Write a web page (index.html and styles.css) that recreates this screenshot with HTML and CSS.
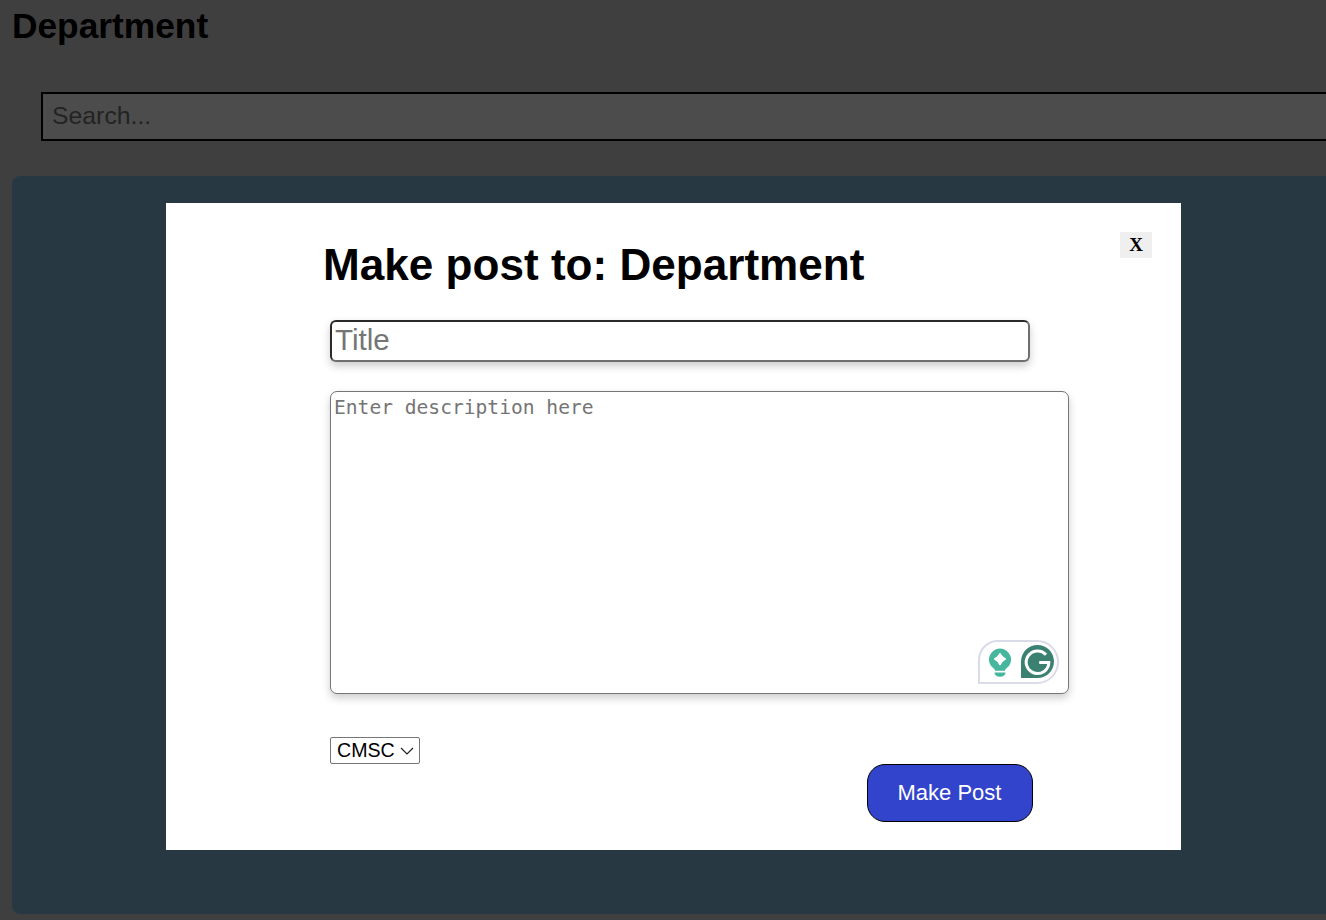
FILE: index.html
```html
<!DOCTYPE html>
<html lang="en">
<head>
<meta charset="utf-8">
<title>Department</title>
<link rel="stylesheet" href="styles.css">
</head>
<body>
<main class="page">
  <h1 class="page-title">Department</h1>
  <input class="search" type="text" placeholder="Search...">
  <section class="panel"></section>
</main>
<div class="overlay">
  <div class="modal">
    <button class="close" type="button">X</button>
    <h2 class="modal-title">Make post to: Department</h2>
    <form class="form">
      <input class="title-input" type="text" placeholder="Title">
      <div class="desc-wrap">
        <textarea class="desc" placeholder="Enter description here"></textarea>
        <div class="grammarly">
          <svg class="g-bulb" width="24" height="30" viewBox="0 0 24 30">
            <path d="M12 0.5a11 11 0 0 1 6.2 20.1c-.8.6-1 1.1-1.2 2.2H7c-.2-1.1-.4-1.6-1.2-2.2A11 11 0 0 1 12 .5z" fill="#46b79d"/>
            <path d="M12 4.800c1 .2 1.200 1.800 2.600 3.300 1.400 1.500 3.400 1.900 3.400 3 0 1.100-2 1.500-3.400 3-1.400 1.500-1.600 3.100-2.600 3.300-1-.2-1.200-1.800-2.600-3.300-1.400-1.500-3.400-1.900-3.400-3 0-1.100 2-1.500 3.400-3 1.400-1.500 1.600-3.100 2.600-3.300z" fill="#fff"/>
            <path d="M6.500 24.500h11c0 2.600-2 4.300-5.500 4.300s-5.500-1.700-5.500-4.300z" fill="#46b79d"/>
          </svg>
          <svg class="g-logo" width="33" height="33" viewBox="0 0 33 33">
            <path d="M16.500 0a16.500 16.500 0 0 1 0 33H0V16.500A16.500 16.500 0 0 1 16.500 0z" fill="#3a8171"/>
            <path d="M25 9.800A11.300 11.300 0 1 0 27.800 17.500H18.200" fill="none" stroke="#fff" stroke-width="3"/>
          </svg>
        </div>
      </div>
      <div class="actions">
        <select class="dept"><option>CMSC</option></select>
        <button class="submit" type="button">Make Post</button>
      </div>
    </form>
  </div>
</div>
</body>
</html>
```
FILE: styles.css
```css
* { box-sizing: border-box; }
html, body {
  margin: 0;
  height: 100%;
  overflow: hidden;
}
body {
  background: #d4d4d4;
  font-family: "Liberation Sans", Arial, sans-serif;
}
.page {
  width: 1440px;
  padding: 0 0 0 12px;
}
.page-title {
  margin: 0;
  padding-top: 6px;
  font-size: 35.3px;
  line-height: 40px;
  font-weight: 700;
  color: #000;
}
.search {
  display: block;
  width: 1400px;
  height: 49px;
  margin: 46px 0 0 29px;
  padding: 0 9px 1px;
  border: 2px solid #000;
  background: #fff;
  font: 24.8px "Liberation Sans", Arial, sans-serif;
  border-radius: 0;
  outline: none;
}
.search::placeholder { color: #757575; }
.panel {
  height: 738px;
  margin-top: 35px;
  background: #82bbdc;
  border-radius: 8px;
}
.overlay {
  position: fixed;
  inset: 0;
  background: rgba(0, 0, 0, 0.7);
}
.modal {
  position: relative;
  width: 1015px;
  height: 647px;
  margin: 203px 0 0 166px;
  padding: 34px 0 0 157px;
  background: #fff;
}
.close {
  position: absolute;
  top: 29px;
  right: 29px;
  width: 32px;
  height: 26px;
  padding: 0;
  border: 0;
  background: #efefef;
  font: 700 19px "Liberation Serif", "Times New Roman", serif;
  color: #000;
}
.modal-title {
  margin: 0;
  font-size: 44.1px;
  line-height: 56px;
  font-weight: 700;
  color: #000;
}
.form {
  display: flex;
  flex-direction: column;
  align-items: flex-start;
  margin: 27px 0 0 7px;
}
.title-input {
  width: 700px;
  height: 42px;
  padding: 0 3px 2px;
  border: 2px solid #6f6f6f;
  border-color: #2a2a2a #6f6f6f #6f6f6f #2a2a2a;
  border-radius: 6px;
  background: #fff;
  font: 29.6px "Liberation Sans", Arial, sans-serif;
  box-shadow: 0 4px 8px rgba(0, 0, 0, 0.2);
  outline: none;
}
.title-input::placeholder { color: #757575; }
.desc-wrap {
  position: relative;
  width: 739px;
  height: 303px;
  margin-top: 29px;
}
.desc {
  display: block;
  width: 100%;
  height: 100%;
  padding: 4px 3px 3px;
  border: 1px solid #767676;
  border-radius: 7px;
  background: #fff;
  font: 19.6px "DejaVu Sans Mono", monospace;
  line-height: 24px;
  resize: none;
  box-shadow: 0 4px 8px rgba(0, 0, 0, 0.2);
  outline: none;
}
.desc::placeholder { color: #757575; }
.grammarly {
  position: absolute;
  top: 249px;
  left: 648px;
  width: 81px;
  height: 44px;
  border: 2px solid #d9dce8;
  border-radius: 20px 22px 22px 0;
  background: #fff;
}
.g-bulb {
  position: absolute;
  top: 6px;
  left: 8px;
}
.g-logo {
  position: absolute;
  top: 3px;
  left: 41px;
}
.actions {
  display: flex;
  align-items: flex-start;
  justify-content: space-between;
  width: 703px;
  margin-top: 43px;
}
.dept {
  width: 90px;
  height: 27px;
  padding: 0 0 2px 6px;
  border: 1px solid #767676;
  border-radius: 2px;
  appearance: none;
  background: #fff url("data:image/svg+xml,%3Csvg xmlns='http://www.w3.org/2000/svg' width='14' height='8' viewBox='0 0 14 8'%3E%3Cpath d='M1 1l6 6 6-6' fill='none' stroke='%23222' stroke-width='1.200'/%3E%3C/svg%3E") no-repeat right 5px center;
  font: 19.6px "Liberation Sans", Arial, sans-serif;
  color: #000;
}
.submit {
  width: 166px;
  height: 58px;
  margin-top: 27px;
  padding: 0 1px 0 0;
  border: 1.5px solid #000;
  border-radius: 18px;
  background: #3344cc;
  color: #fff;
  font: 22px "Liberation Sans", Arial, sans-serif;
}
```
